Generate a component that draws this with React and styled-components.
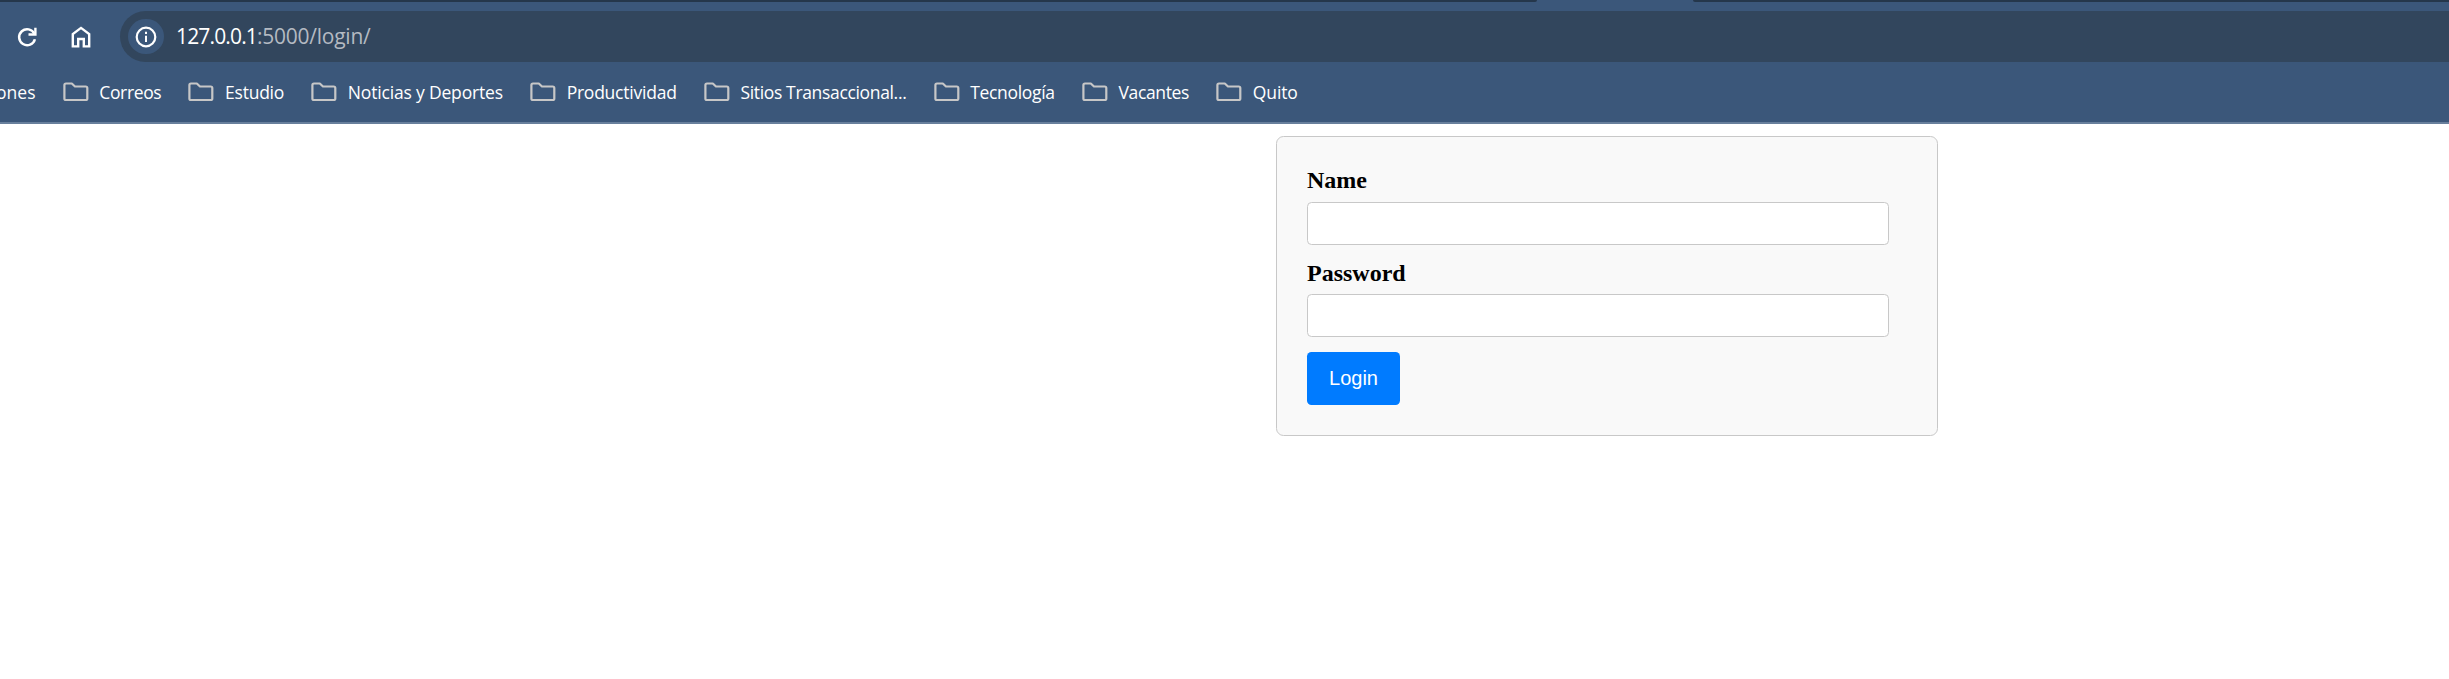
import React, { useLayoutEffect, useRef } from "react";
import styled, { createGlobalStyle } from "styled-components";

const GlobalStyle = createGlobalStyle`
  * { box-sizing: border-box; }
  body { margin: 0; background: #fff; overflow: hidden; }
`;

const Browser = styled.div`
  width: 100%;
  height: 679px;
  display: flex;
  flex-direction: column;
  background: #fff;
`;

const Chrome = styled.header`
  height: 124px;
  background: #3b577a;
  border-bottom: 2px solid #687f9c;
  font-family: "Open Sans", "Noto Sans", sans-serif;
  color: #fff;
`;

const TabStrip = styled.div`
  display: flex;
  justify-content: space-between;
  height: 2px;
`;

const InactiveTabs = styled.div`
  width: ${(p) => p.$width}px;
  background: #25374b;
  border-radius: ${(p) => (p.$side === "left" ? "0 0 2px 0" : "0 0 0 2px")};
`;

const Toolbar = styled.div`
  display: flex;
  align-items: center;
  height: 69px;
  padding-left: 15px;
`;

const NavIcon = styled.svg`
  display: block;
  flex: none;
  width: 24px;
  height: 24px;
  margin-right: ${(p) => p.$gap}px;
`;

const AddressBar = styled.div`
  display: flex;
  align-items: center;
  flex: 1;
  height: 51px;
  padding-left: 8px;
  border-radius: 26px 0 0 26px;
  background: #32465d;
`;

const SiteInfo = styled.span`
  display: flex;
  align-items: center;
  justify-content: center;
  width: 35.5px;
  height: 35.5px;
  margin-right: 12.5px;
  border-radius: 50%;
  background: #3b577a;
`;

const Url = styled.span`
  display: flex;
  padding-bottom: 1px;
  font-size: 21px;
  line-height: 28px;
  white-space: nowrap;
`;

const UrlPart = styled.span`
  display: block;
  width: ${(p) => p.$width}px;
  color: ${(p) => p.$color};
`;

const Bookmarks = styled.nav`
  display: flex;
  align-items: center;
  gap: 27.1px;
  height: 42px;
`;

const Clipped = styled.div`
  display: flex;
  justify-content: flex-end;
  width: 35.5px;
  overflow: hidden;
  font-size: 17.5px;
  line-height: 24px;
`;

const Bookmark = styled.div`
  display: flex;
  align-items: center;
  gap: 10.7px;
`;

const Label = styled.span`
  display: block;
  width: ${(p) => p.$width}px;
  font-size: 17.5px;
  line-height: 24px;
  white-space: nowrap;
`;

const FolderSvg = styled.svg`
  display: block;
  flex: none;
`;

const Page = styled.main`
  padding: 12px 0 0 1276px;
`;

const Card = styled.form`
  width: 662px;
  height: 300px;
  padding: 30px;
  border: 1px solid #c8c8c8;
  border-radius: 7.5px;
  background: #f9f9f9;
`;

const FieldLabel = styled.label`
  display: block;
  height: 27px;
  margin-bottom: ${(p) => p.$gap}px;
  font: bold 24px/27px "Liberation Serif", serif;
  color: #000;
`;

const Field = styled.input`
  display: block;
  width: 582px;
  height: 43px;
  margin: 0 0 ${(p) => p.$gap}px;
  padding: 12px;
  border: 1px solid #c8c8c8;
  border-radius: 4.5px;
  background: #fff;
`;

const LoginButton = styled.button`
  display: block;
  width: 93px;
  height: 53px;
  padding: 0 0 2px;
  border: 0;
  border-radius: 4.5px;
  background: #007bff;
  color: #fff;
  font: 20px/24px "Liberation Sans", sans-serif;
`;

const bookmarks = [
  ["Correos", 62],
  ["Estudio", 59],
  ["Noticias y Deportes", 155],
  ["Productividad", 110],
  ["Sitios Transaccional...", 166],
  ["Tecnología", 84.5],
  ["Vacantes", 70.5],
  ["Quito", 45],
];

// Tracks the text so that each label fills exactly its own slot.
function useFittedTracking(text, width) {
  const ref = useRef(null);
  useLayoutEffect(() => {
    const node = ref.current;
    node.style.letterSpacing = "0px";
    const range = document.createRange();
    range.selectNodeContents(node);
    const natural = range.getBoundingClientRect().width;
    node.style.letterSpacing = `${(width - natural) / text.length}px`;
  }, [text, width]);
  return ref;
}

function BookmarkLabel({ text, width }) {
  const ref = useFittedTracking(text, width);
  return (
    <Label ref={ref} $width={width}>
      {text}
    </Label>
  );
}

function UrlText({ text, width, color }) {
  const ref = useFittedTracking(text, width);
  return (
    <UrlPart ref={ref} $width={width} $color={color}>
      {text}
    </UrlPart>
  );
}

const FolderIcon = () => (
  <FolderSvg width="26" height="20" viewBox="0 0 26 20" fill="none">
    <path
      d="M3 1.5H8.8L12 4.5H22.7Q24.3 4.5 24.3 6.1V16.4Q24.3 18 22.7 18H3Q1.4 18 1.4 16.4V3.1Q1.4 1.5 3 1.5Z"
      stroke="#c7c7c7"
      strokeWidth="2.2"
      strokeLinejoin="round"
    />
  </FolderSvg>
);

export default function App() {
  return (
    <>
      <GlobalStyle />
      <Browser>
        <Chrome>
          <TabStrip>
            <InactiveTabs $width={1537} $side="left" />
            <InactiveTabs $width={756} $side="right" />
          </TabStrip>
          <Toolbar>
            <NavIcon viewBox="0 0 24 24" fill="none" $gap={30}>
              <path d="M19.4 8.8A8 8 0 1 0 19.9 14.2" stroke="#fff" strokeWidth="2.5" />
              <path d="M20.4 2.8V9.5H13.5" stroke="#fff" strokeWidth="2.4" />
            </NavIcon>
            <NavIcon viewBox="0 0 24 24" fill="none" $gap={27}>
              <path
                d="M3.8 21.4V9L12 2.9L20.2 9V21.4H14.8V14H9.2V21.4Z"
                stroke="#fff"
                strokeWidth="2.4"
              />
            </NavIcon>
            <AddressBar>
              <SiteInfo>
                <svg width="22" height="22" viewBox="0 0 22 22" fill="none">
                  <circle cx="11" cy="11" r="9.3" stroke="#fff" strokeWidth="2.2" />
                  <path d="M11 9.8V16M11 5.8V8" stroke="#fff" strokeWidth="2" />
                </svg>
              </SiteInfo>
              <Url>
                <UrlText text="127.0.0.1" width={81} color="#fff" />
                <UrlText text=":5000/login/" width={113.5} color="#b4bac2" />
              </Url>
            </AddressBar>
          </Toolbar>
          <Bookmarks>
            <Clipped>ones</Clipped>
            {bookmarks.map(([text, width]) => (
              <Bookmark key={text}>
                <FolderIcon />
                <BookmarkLabel text={text} width={width} />
              </Bookmark>
            ))}
          </Bookmarks>
        </Chrome>
        <Page>
          <Card onSubmit={(e) => e.preventDefault()}>
            <FieldLabel htmlFor="name" $gap={8}>Name</FieldLabel>
            <Field id="name" type="text" $gap={15} />
            <FieldLabel htmlFor="password" $gap={7}>Password</FieldLabel>
            <Field id="password" type="password" $gap={15} />
            <LoginButton type="submit">Login</LoginButton>
          </Card>
        </Page>
      </Browser>
    </>
  );
}
